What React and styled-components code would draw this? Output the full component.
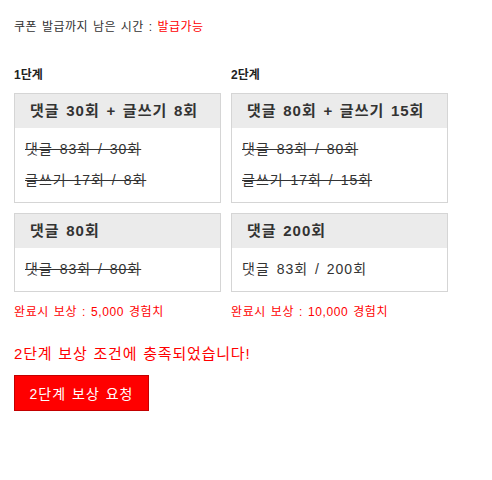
import React from 'react';
import styled, { createGlobalStyle } from 'styled-components';

const GlobalStyle = createGlobalStyle`
  body {
    margin: 0;
    background: #fff;
    font-family: "Liberation Sans", "Noto Sans CJK KR", sans-serif;
    color: #333;
  }
`;

const Page = styled.div`
  padding: 20px 14px;
`;

const TopLine = styled.div`
  font-size: 12px;
  line-height: 14px;
  letter-spacing: 0.5px;
  word-spacing: 1px;
`;

const Red = styled.span`
  color: #ff0000;
`;

const Stages = styled.div`
  display: grid;
  grid-template-columns: 207px 217px;
  column-gap: 10px;
  margin-top: 34px;
`;

const Label = styled.div`
  font-size: 12px;
  line-height: 14px;
  font-weight: bold;
  color: #222;
  margin-bottom: 11px;
`;

const Box = styled.div`
  border: 1px solid #d5d5d5;
  margin-bottom: ${(p) => (p.$last ? '0' : '10px')};
`;

const BoxHead = styled.div`
  background: #ebebeb;
  height: 34px;
  line-height: 34px;
  padding-left: 15px;
  font-size: 15px;
  font-weight: bold;
  letter-spacing: 1px;
  word-spacing: 1.5px;
`;

const BoxBody = styled.div`
  padding: 6px 10px;
`;

const Line = styled.div`
  font-size: 14px;
  line-height: 31px;
  letter-spacing: 1px;
  word-spacing: 2px;
  text-decoration: ${(p) => (p.$done ? 'line-through' : 'none')};
`;

const Reward = styled.div`
  color: #ff0000;
  font-size: 12px;
  line-height: 14px;
  letter-spacing: 0.6px;
  word-spacing: 1px;
  margin-top: 13px;
`;

const Message = styled.div`
  color: #ff0000;
  font-size: 15px;
  line-height: 18px;
  letter-spacing: 0.8px;
  word-spacing: 1px;
  margin-top: 26px;
`;

const RequestButton = styled.button`
  display: block;
  margin-top: 12px;
  width: 135px;
  height: 36px;
  background: #ff0000;
  border: 1px solid #c30000;
  color: #fff;
  font-family: inherit;
  font-size: 14px;
  letter-spacing: 1px;
  word-spacing: 1px;
  padding: 0;
  cursor: pointer;
`;

const stages = [
  {
    label: '1단계',
    reward: '완료시 보상 : 5,000 경험치',
    boxes: [
      {
        title: '댓글 30회 + 글쓰기 8회',
        lines: [
          { text: '댓글 83회 / 30회', done: true },
          { text: '글쓰기 17회 / 8회', done: true },
        ],
      },
      {
        title: '댓글 80회',
        lines: [{ text: '댓글 83회 / 80회', done: true }],
      },
    ],
  },
  {
    label: '2단계',
    reward: '완료시 보상 : 10,000 경험치',
    boxes: [
      {
        title: '댓글 80회 + 글쓰기 15회',
        lines: [
          { text: '댓글 83회 / 80회', done: true },
          { text: '글쓰기 17회 / 15회', done: true },
        ],
      },
      {
        title: '댓글 200회',
        lines: [{ text: '댓글 83회 / 200회', done: false }],
      },
    ],
  },
];

function StageBox({ box, last }) {
  return (
    <Box $last={last}>
      <BoxHead>{box.title}</BoxHead>
      <BoxBody>
        {box.lines.map((l) => (
          <Line key={l.text} $done={l.done}>{l.text}</Line>
        ))}
      </BoxBody>
    </Box>
  );
}

export default function App() {
  return (
    <Page>
      <GlobalStyle />
      <TopLine>
        쿠폰 발급까지 남은 시간 : <Red>발급가능</Red>
      </TopLine>
      <Stages>
        {stages.map((s) => (
          <Label key={s.label}>{s.label}</Label>
        ))}
        {stages.map((s) => (
          <StageBox key={s.label + '0'} box={s.boxes[0]} />
        ))}
        {stages.map((s) => (
          <StageBox key={s.label + '1'} box={s.boxes[1]} last />
        ))}
        {stages.map((s) => (
          <Reward key={s.label + 'r'}>{s.reward}</Reward>
        ))}
      </Stages>
      <Message>2단계 보상 조건에 충족되었습니다!</Message>
      <RequestButton>2단계 보상 요청</RequestButton>
    </Page>
  );
}
